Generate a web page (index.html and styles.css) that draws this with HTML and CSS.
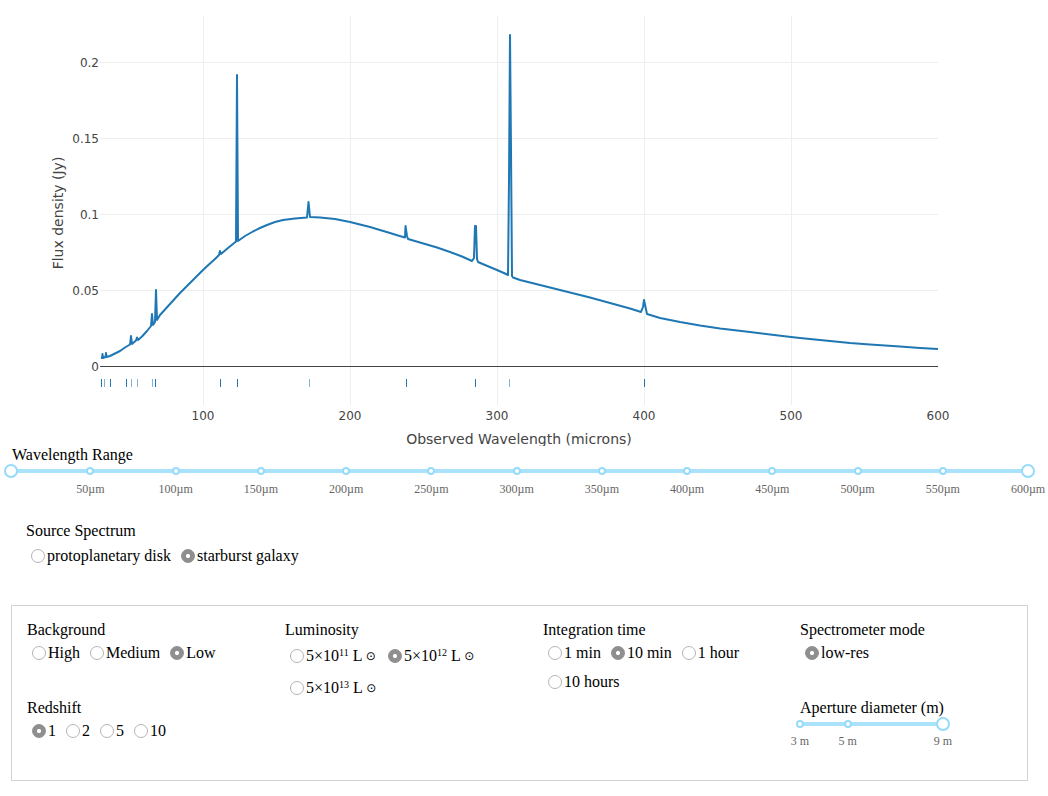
FILE: index.html
```
<!DOCTYPE html>
<html lang="en">
<head>
<meta charset="utf-8">
<title>Spectrum</title>
<link rel="stylesheet" href="styles.css">
</head>
<body>
<div class="graph">
<svg class="plot" width="1048" height="446" viewBox="0 0 1048 446">
  <g class="grid">
    <path d="M100,62.5H938M100,138.5H938M100,214.5H938M100,290.5H938"/>
    <path d="M203.5,16V405M350.5,16V405M497.5,16V405M644.5,16V405M791.5,16V405"/>
  </g>
  <path class="zeroline" d="M100,366.5H938"/>
  <path class="curve" d="M101,358 L102,358 L102.5,354 L103,358 L105.5,357 L106,353 L106.5,357 L110,356 L115,353.5 L120,351 L125,347.5 L130,344.5 L131,336 L132,344 L136,340.5 L137,337.5 L138,340 L142,336.5 L147,331 L151,326 L152,314 L153,325 L155,322 L156,290 L157,320 L160,315 L165,309.5 L170,304 L175,298.5 L180,293 L185,288 L190,283 L196,277 L203,270 L210,263.5 L215,259 L219,255 L220,251 L221,254 L228,248 L236,241.5 L237,75 L238,241 L245,236 L253,231.5 L260,228 L267,225 L275,222 L283,220 L295,218.5 L307,217.5 L308.5,202 L310,217 L320,217.5 L335,219 L350,222 L360,224.5 L370,227 L380,230 L390,233 L398,235.5 L405,237.5 L405.5,226 L407,236 L408,239 L420,242.5 L437,247.5 L450,252 L462,256.5 L472,261 L474,258 L475,226 L476,226 L477,259 L478,262 L485,265 L497,270 L505,273.5 L508,275 L509,180 L510,35 L511,150 L512,276 L513,277.5 L520,280 L530,282.5 L550,287.5 L570,292.5 L590,297.5 L610,303 L630,308.5 L641,312 L643,307 L644,300 L645.5,307 L647,314 L660,318 L680,322 L700,325.5 L720,328.5 L750,332 L770,334.5 L791,337 L800,338 L820,340 L840,342 L850,343 L870,344.5 L900,346.5 L920,348 L938,349"/>
  <g class="rug">
    <path d="M101.5,379V387M110.5,379V387M126.5,379V387M155.5,379V387M220.5,379V387M237.5,379V387M406.5,379V387M475.5,379V387M644.5,379V387"/>
    <path class="rug-light" d="M104.5,379V387M131.5,379V387M137.5,379V387M152.5,379V387M309.5,379V387M509.5,379V387"/>
  </g>
  <g class="tick ytick">
    <text x="99" y="67">0.2</text>
    <text x="99" y="143">0.15</text>
    <text x="99" y="219">0.1</text>
    <text x="99" y="295">0.05</text>
    <text x="99" y="371">0</text>
  </g>
  <g class="tick xtick">
    <text x="203" y="419.5">100</text>
    <text x="350" y="419.5">200</text>
    <text x="497" y="419.5">300</text>
    <text x="644" y="419.5">400</text>
    <text x="791" y="419.5">500</text>
    <text x="938" y="419.5">600</text>
  </g>
  <text class="axis-title" x="519" y="443.5">Observed Wavelength (microns)</text>
  <text class="axis-title" transform="translate(62.5,213) rotate(-90)">Flux density (Jy)</text>
</svg>
</div>

<section class="range">
  <div class="heading range-title">Wavelength Range</div>
  <div class="slider range-slider">
    <div class="rail"></div>
    <span class="dot" style="left:7.817%"></span>
    <span class="dot" style="left:16.198%"></span>
    <span class="dot" style="left:24.578%"></span>
    <span class="dot" style="left:32.958%"></span>
    <span class="dot" style="left:41.339%"></span>
    <span class="dot" style="left:49.719%"></span>
    <span class="dot" style="left:58.099%"></span>
    <span class="dot" style="left:66.479%"></span>
    <span class="dot" style="left:74.860%"></span>
    <span class="dot" style="left:83.240%"></span>
    <span class="dot" style="left:91.620%"></span>
    <span class="handle" style="left:0%"></span>
    <span class="handle" style="left:100%"></span>
  </div>
  <div class="marks range-marks">
    <span class="mark" style="left:7.817%">50µm</span>
    <span class="mark" style="left:16.198%">100µm</span>
    <span class="mark" style="left:24.578%">150µm</span>
    <span class="mark" style="left:32.958%">200µm</span>
    <span class="mark" style="left:41.339%">250µm</span>
    <span class="mark" style="left:49.719%">300µm</span>
    <span class="mark" style="left:58.099%">350µm</span>
    <span class="mark" style="left:66.479%">400µm</span>
    <span class="mark" style="left:74.860%">450µm</span>
    <span class="mark" style="left:83.240%">500µm</span>
    <span class="mark" style="left:91.620%">550µm</span>
    <span class="mark" style="left:100%">600µm</span>
  </div>
</section>

<section class="source">
  <div class="heading">Source Spectrum</div>
  <div class="radios">
    <label class="opt"><input type="radio" name="source">protoplanetary disk</label>
    <label class="opt"><input type="radio" name="source" checked>starburst galaxy</label>
  </div>
</section>

<section class="controls">
  <div class="col">
    <div class="group">
      <div class="heading">Background</div>
      <div class="radios">
        <label class="opt"><input type="radio" name="bg">High</label>
        <label class="opt"><input type="radio" name="bg">Medium</label>
        <label class="opt"><input type="radio" name="bg" checked>Low</label>
      </div>
    </div>
    <div class="group">
      <div class="heading">Redshift</div>
      <div class="radios">
        <label class="opt"><input type="radio" name="z" checked>1</label>
        <label class="opt"><input type="radio" name="z">2</label>
        <label class="opt"><input type="radio" name="z">5</label>
        <label class="opt"><input type="radio" name="z">10</label>
      </div>
    </div>
  </div>
  <div class="col">
    <div class="group">
      <div class="heading">Luminosity</div>
      <div class="radios lum">
        <label class="opt"><input type="radio" name="lum">5×10<sup>11</sup> L <span class="sun">⊙</span></label>
        <label class="opt"><input type="radio" name="lum" checked>5×10<sup>12</sup> L <span class="sun">⊙</span></label>
        <label class="opt"><input type="radio" name="lum">5×10<sup>13</sup> L <span class="sun">⊙</span></label>
      </div>
    </div>
  </div>
  <div class="col">
    <div class="group">
      <div class="heading">Integration time</div>
      <div class="radios">
        <label class="opt"><input type="radio" name="t">1 min</label>
        <label class="opt"><input type="radio" name="t" checked>10 min</label>
        <label class="opt"><input type="radio" name="t">1 hour</label>
        <label class="opt"><input type="radio" name="t">10 hours</label>
      </div>
    </div>
  </div>
  <div class="col">
    <div class="group">
      <div class="heading">Spectrometer mode</div>
      <div class="radios">
        <label class="opt"><input type="radio" name="mode" checked>low-res</label>
      </div>
    </div>
    <div class="group">
      <div class="heading">Aperture diameter (m)</div>
      <div class="slider aperture-slider">
        <div class="rail"></div>
        <span class="dot" style="left:0%"></span>
        <span class="dot" style="left:33.333%"></span>
        <span class="handle" style="left:100%"></span>
      </div>
      <div class="marks aperture-marks">
        <span class="mark" style="left:0%">3 m</span>
        <span class="mark" style="left:33.333%">5 m</span>
        <span class="mark" style="left:100%">9 m</span>
      </div>
    </div>
  </div>
</section>
</body>
</html>
```
FILE: styles.css
```
html, body {
  background: #fff;
}
body {
  margin: 0;
  font-family: "Liberation Serif", "Times New Roman", serif;
  font-size: 16px;
  line-height: 18px;
  color: #000;
}

/* ---------- plot ---------- */
.plot {
  display: block;
}
.grid path {
  stroke: #eee;
  stroke-width: 1;
  fill: none;
}
.zeroline {
  stroke: #444;
  stroke-width: 1;
  fill: none;
}
.curve {
  fill: none;
  stroke: #1f77b4;
  stroke-width: 2;
  stroke-linejoin: round;
}
.rug path {
  stroke: #1f77b4;
  stroke-width: 1;
  fill: none;
}
.rug .rug-light {
  stroke-opacity: 0.55;
}
.tick text,
.axis-title {
  font-family: "DejaVu Sans", Verdana, sans-serif;
  fill: #444;
}
.tick text {
  font-size: 12px;
}
.ytick text {
  text-anchor: end;
}
.xtick text {
  text-anchor: middle;
}
.axis-title {
  font-size: 14px;
  text-anchor: middle;
}

/* ---------- sliders ---------- */
.range-title {
  padding-left: 12px;
}
.slider {
  position: relative;
  height: 14px;
}
.range-slider,
.range-marks {
  margin-left: 11px;
  width: 1017px;
}
.rail {
  position: absolute;
  left: 0;
  right: 0;
  top: 5px;
  height: 4px;
  border-radius: 6px;
  background: #abe2fb;
}
.dot {
  position: absolute;
  top: 3px;
  width: 8px;
  height: 8px;
  margin-left: -4px;
  box-sizing: border-box;
  border: 2px solid #96dbfa;
  border-radius: 50%;
  background: #fff;
}
.handle {
  position: absolute;
  top: 0;
  width: 14px;
  height: 14px;
  margin-left: -7px;
  box-sizing: border-box;
  border: 2px solid #96dbfa;
  border-radius: 50%;
  background: #fff;
}
.marks {
  position: relative;
  height: 14px;
  margin-top: 4px;
  font-size: 12px;
  line-height: 14px;
  color: #666;
}
.mark {
  position: absolute;
  top: 0;
  transform: translateX(-50%);
  white-space: nowrap;
}
.aperture-slider,
.aperture-marks {
  width: 143px;
}
.aperture-marks {
  margin-top: 3px;
}

/* ---------- radios ---------- */
.source {
  margin-top: 26px;
  padding-left: 26px;
}
.source .radios {
  margin-top: 7px;
}
.radios {
  display: flex;
  flex-wrap: wrap;
  align-items: baseline;
  margin-top: 5px;
}
.opt {
  margin: 0 5px 11px 0;
  white-space: nowrap;
}
.lum .opt {
  margin-right: 7px;
}
.opt input {
  -webkit-appearance: none;
  appearance: none;
  box-sizing: border-box;
  width: 14px;
  height: 14px;
  margin: 0 2px 0 5px;
  border: 1px solid #b5b5b5;
  border-radius: 50%;
  background: #fff;
  vertical-align: -2px;
}
.opt input:checked {
  border-color: #8f8f8f;
  background: radial-gradient(circle, #fff 0 1.7px, #8f8f8f 2.4px);
}
.opt sup {
  font-size: 10px;
  vertical-align: 5px;
}
.sun {
  font-family: "DejaVu Sans", sans-serif;
  font-size: 12px;
  vertical-align: 1px;
}

/* ---------- control box ---------- */
.controls {
  margin: 29px 0 0 11px;
  width: 1017px;
  height: 176px;
  box-sizing: border-box;
  border: 1px solid #d3d3d3;
  padding: 15px 0 0 15px;
  display: grid;
  grid-template-columns: 258px 258px 257px 1fr;
  align-items: start;
}
.group + .group {
  margin-top: 26px;
}
```
